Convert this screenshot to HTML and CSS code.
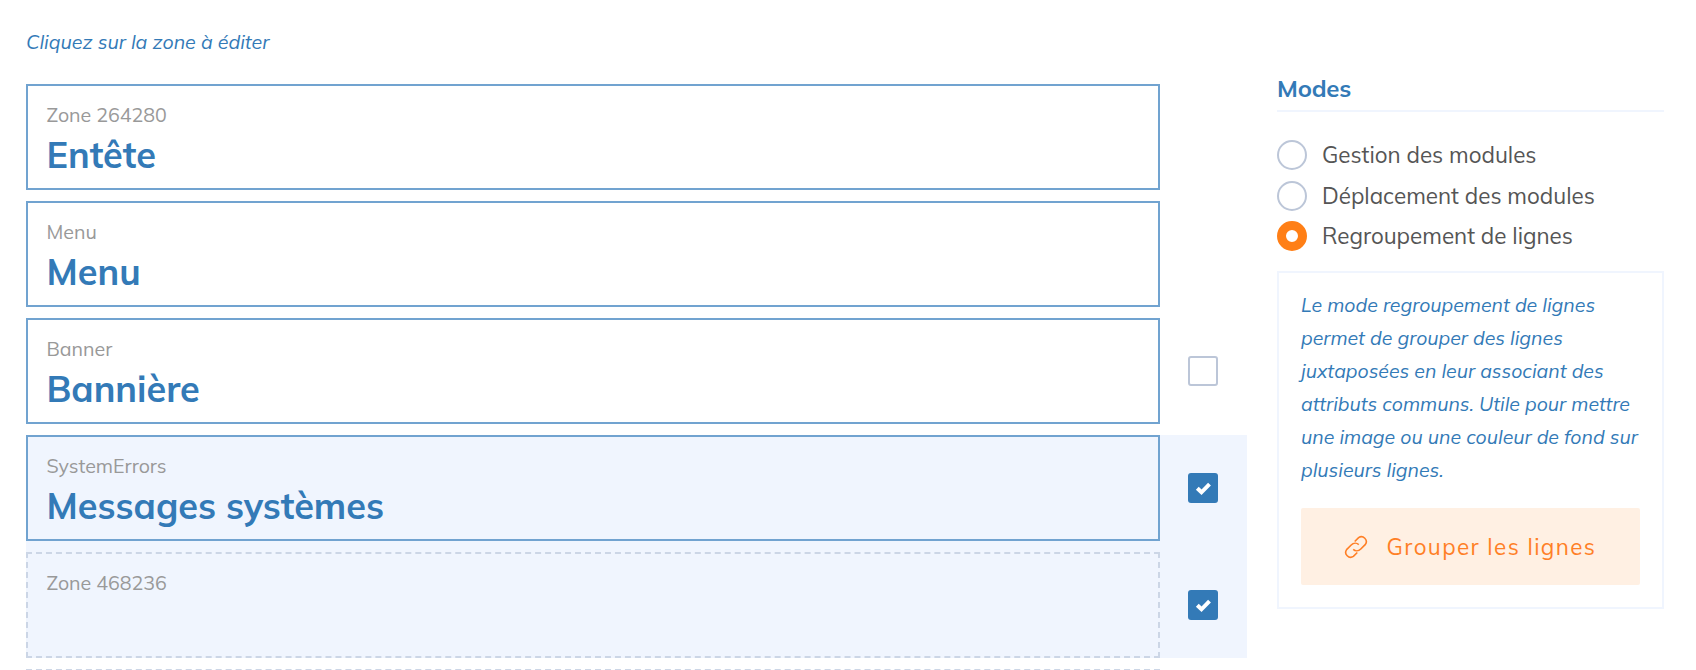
FILE: index.html
```html
<!DOCTYPE html>
<html lang="fr">
<head>
<meta charset="utf-8">
<title>Édition des zones</title>
<link rel="stylesheet" href="styles.css">
</head>
<body>
<div class="page">
  <main class="zones">
    <p class="hint">Cliquez sur la zone à éditer</p>
    <div class="row">
      <section class="zone"><span class="name">Zone 264280</span><h2 class="title">Entête</h2></section>
    </div>
    <div class="row">
      <section class="zone"><span class="name">Menu</span><h2 class="title">Menu</h2></section>
    </div>
    <div class="row">
      <section class="zone"><span class="name">Banner</span><h2 class="title">Bannière</h2></section>
      <span class="check"></span>
    </div>
    <div class="row selected joined">
      <section class="zone"><span class="name">SystemErrors</span><h2 class="title">Messages systèmes</h2></section>
      <span class="check on"><svg class="tick" viewBox="0 0 30 30"><path d="M9.3 15.2 13.5 19.3 21.5 11.2"/></svg></span>
    </div>
    <div class="row selected">
      <section class="zone empty"><span class="name">Zone 468236</span></section>
      <span class="check on"><svg class="tick" viewBox="0 0 30 30"><path d="M9.3 15.2 13.5 19.3 21.5 11.2"/></svg></span>
    </div>
    <div class="next"><section class="zone empty"></section></div>
  </main>
  <aside class="modes">
    <h3 class="heading">Modes</h3>
    <div class="options">
      <label class="option"><span class="radio"></span><span class="label">Gestion des modules</span></label>
      <label class="option"><span class="radio"></span><span class="label">Déplacement des modules</span></label>
      <label class="option"><span class="radio on"></span><span class="label">Regroupement de lignes</span></label>
    </div>
    <div class="panel">
      <p class="help">Le mode regroupement de lignes<br>permet de grouper des lignes<br>juxtaposées en leur associant des<br>attributs communs. Utile pour mettre<br>une image ou une couleur de fond sur<br>plusieurs lignes.</p>
      <div class="button">
        <svg class="link" viewBox="0 0 24 24"><path d="M10.7 6.5 14.6 2.6a4.9 4.9 0 0 1 6.8 6.8L16.8 14C14.5 16.3 11.2 16.2 9.2 14.4"/><path d="M13.3 17.5 9.4 21.4a4.9 4.9 0 0 1-6.8-6.8L7.2 10C9.5 7.7 12.8 7.8 14.8 9.6"/></svg>
        <span>Grouper les lignes</span>
      </div>
    </div>
  </aside>
</div>
</body>
</html>
```
FILE: styles.css
```css
* { box-sizing: border-box; }
body {
  margin: 0;
  background: #fff;
  font-family: Muli, Mulish, Lato, sans-serif;
  color: #555;
}
h2, h3, p { margin: 0; }
.page { display: flex; gap: 30px; height: 670px; padding: 27px 32px 0 26px; white-space: nowrap; }
.zones { width: 1221px; }
.hint {
  height: 57px;
  font-size: 19.6px;
  line-height: 30px;
  font-style: italic;
  color: #337ab7;
}
.row { display: flex; align-items: center; height: 106px; margin-bottom: 11px; }
.selected { background: #f0f5fe; }
.joined { height: 117px; margin-bottom: 0; padding-bottom: 11px; }
.zone {
  width: 1134px;
  height: 106px;
  padding: 14px 18.5px;
  border: 2px solid #71a3d0;
}
.empty { border: 2px dashed #ccd6e6; }
.next { height: 1px; overflow: hidden; }
.name { display: block; font-size: 19.6px; line-height: 30px; color: #999; }
.title { font-size: 36px; line-height: 46px; margin-top: 2px; font-weight: 700; color: #337ab7; }
.check { width: 30px; height: 30px; margin-left: 28px; border: 2px solid #bcc6d8; border-radius: 3px; }
.check.on { border: 0; background: #337ab7; }
.tick { display: block; width: 30px; height: 30px; fill: none; stroke: #fff; stroke-width: 4; }
.modes { width: 387px; padding-top: 44px; }
.heading {
  height: 41px;
  font-size: 24px;
  line-height: 34px;
  font-weight: 700;
  letter-spacing: -0.2px;
  color: #337ab7;
  border-bottom: 2px solid #f0f5fe;
}
.options { padding-top: 28px; }
.option { display: flex; align-items: center; gap: 15px; height: 30px; margin-bottom: 10.5px; }
.option:last-child { margin-bottom: 0; }
.radio { width: 30px; height: 30px; border: 2px solid #bcc6d8; border-radius: 50%; }
.radio.on { border: 9.5px solid #ff7f16; }
.label { font-size: 22.4px; line-height: 30px; }
.panel { height: 338px; margin-top: 20px; padding: 15px 22px; border: 2px solid #f0f5fe; }
.help { font-size: 19.5px; line-height: 33px; font-style: italic; color: #337ab7; }
.button {
  display: flex;
  align-items: center;
  gap: 18.5px;
  width: 339px;
  height: 77px;
  margin-top: 22px;
  padding-left: 43px;
  border-radius: 2px;
  background: #fff0e3;
  color: #ff7f26;
  font-size: 22.4px;
  letter-spacing: 1.4px;
}
.link { width: 24px; height: 24px; fill: none; stroke: #ff7f26; stroke-width: 1.6; }
```
